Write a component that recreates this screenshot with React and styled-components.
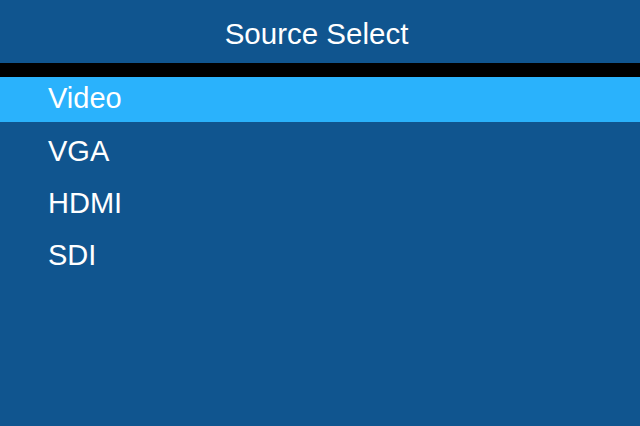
import React from "react";
import styled, { createGlobalStyle } from "styled-components";

const sources = ["Video", "VGA", "HDMI", "SDI"];

const GlobalStyle = createGlobalStyle`
  html, body {
    margin: 0;
    padding: 0;
    background: #10558f;
  }
`;

const Screen = styled.div`
  width: 640px;
  height: 426px;
  background: #10558f;
  color: #ffffff;
  font-family: "Liberation Sans", Arial, sans-serif;
  display: flex;
  flex-direction: column;
  overflow: hidden;
`;

const Header = styled.header`
  height: 63px;
  box-sizing: border-box;
  padding: 4px 7px 0 0;
  line-height: 59px;
  text-align: center;
  font-size: 29.5px;
`;

const Divider = styled.div`
  height: 14px;
  background: #000000;
`;

const List = styled.ul`
  list-style: none;
  margin: 0;
  padding: 0;
  display: flex;
  flex-direction: column;
  gap: 7px;
`;

const Row = styled.li`
  height: 45px;
  box-sizing: border-box;
  padding-left: 48px;
  font-size: 29px;
  line-height: ${({ $selected }) => ($selected ? "42px" : "45px")};
  background: ${({ $selected }) => ($selected ? "#2ab2fc" : "transparent")};
`;

const App = () => {
  return (
    <>
      <GlobalStyle />
      <Screen>
        <Header>Source Select</Header>
        <Divider />
        <List>
          {sources.map((name, i) => (
            <Row key={name} $selected={i === 0}>
              {name}
            </Row>
          ))}
        </List>
      </Screen>
    </>
  );
};

export default App;
